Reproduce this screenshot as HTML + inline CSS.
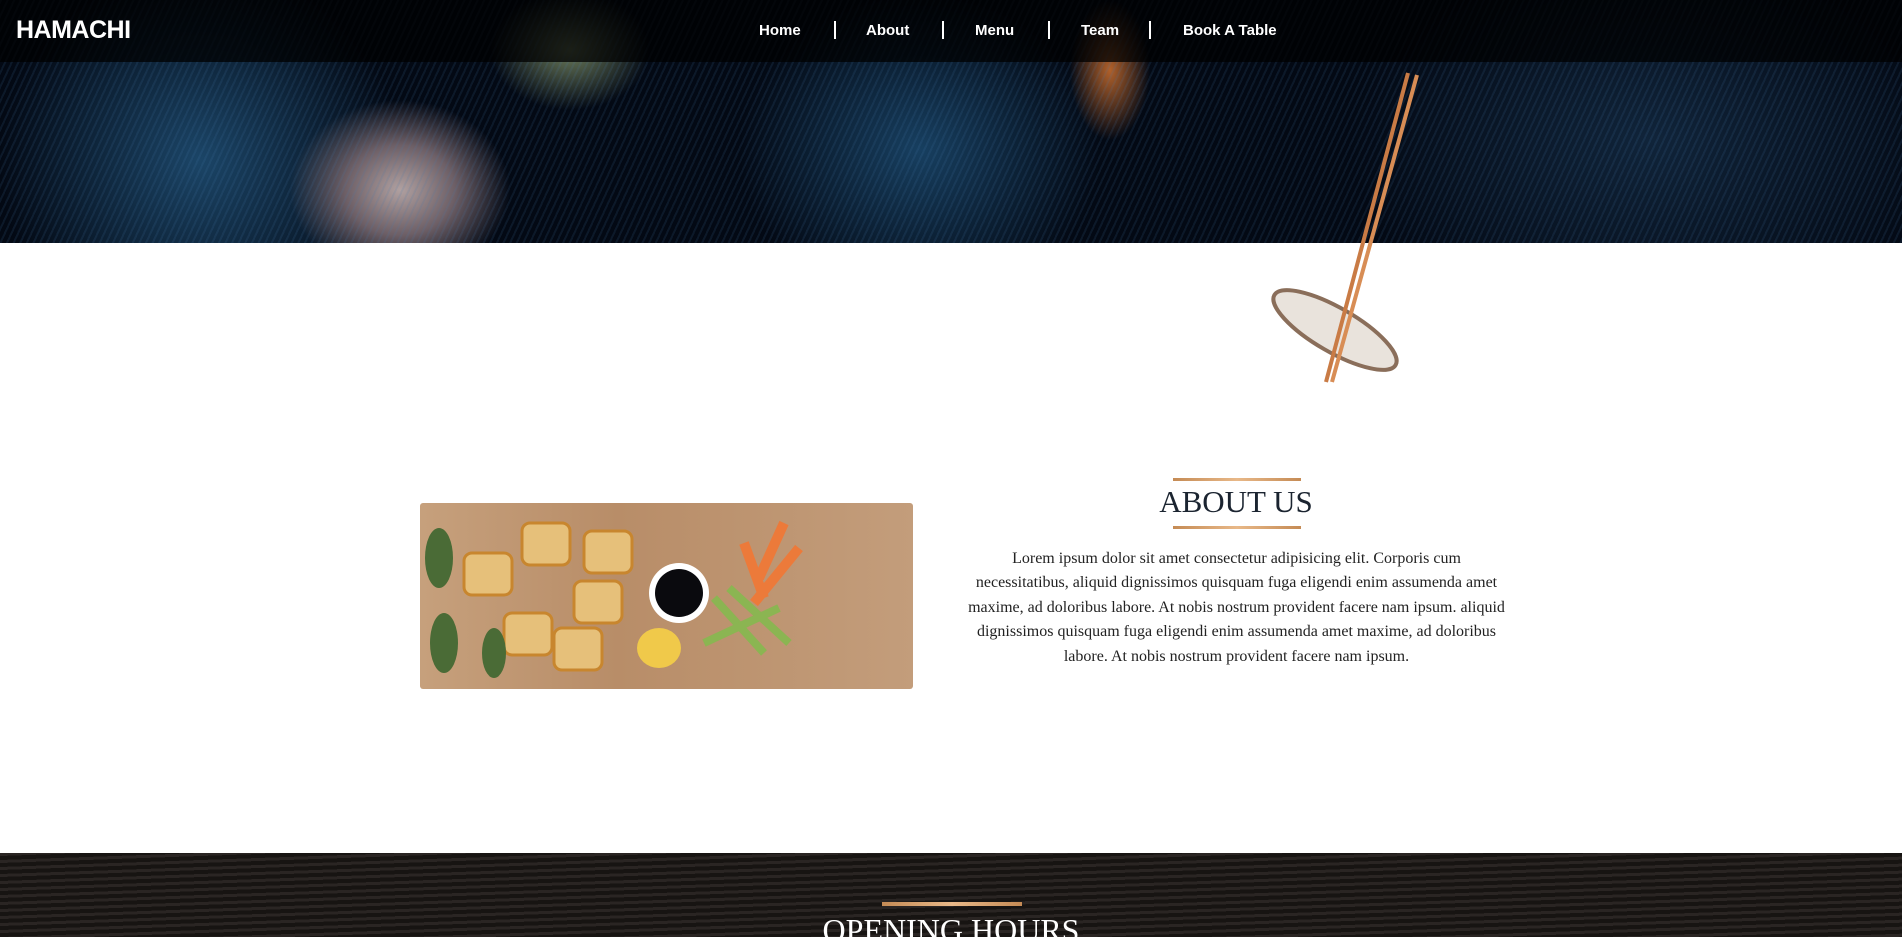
<!DOCTYPE html>
<html><head><meta charset="utf-8"><style>
*{margin:0;padding:0;box-sizing:border-box}
html,body{width:1902px;height:937px;overflow:hidden;background:#fff}
.hero{position:absolute;left:0;top:0;width:1902px;height:243px;overflow:hidden;
background:radial-gradient(ellipse 110px 90px at 400px 190px,#b0a0a0 0%,#6d5f66 50%,rgba(20,30,45,0) 100%),
radial-gradient(ellipse 80px 60px at 570px 50px,#6b7a5a 0%,rgba(0,0,0,0) 100%),
radial-gradient(ellipse 40px 70px at 1110px 70px,#b0602a 0%,rgba(0,0,0,0) 100%),
radial-gradient(ellipse 200px 200px at 200px 160px,#1b4567 0%,rgba(0,0,0,0) 100%),
radial-gradient(ellipse 180px 160px at 920px 150px,#173f60 0%,rgba(0,0,0,0) 100%),
radial-gradient(ellipse 300px 200px at 1650px 140px,#10243a 0%,rgba(0,0,0,0) 100%),
#030914}
.hero .tex{position:absolute;inset:0;background:repeating-linear-gradient(115deg,rgba(70,120,170,.14) 0 2px,rgba(0,0,0,0) 2px 6px)}
.nav{position:absolute;left:0;top:0;width:1902px;height:62px;background:rgba(0,0,0,.75)}
.logo{position:absolute;left:16px;top:16px;color:#fff;font:bold 25px "Liberation Sans",sans-serif;letter-spacing:-.5px}
.nav a{position:absolute;top:22px;color:#fff;font:bold 15px "Liberation Sans",sans-serif;text-decoration:none;white-space:nowrap}
.sep{position:absolute;top:21px;width:2px;height:18px;background:#fff}
.food{position:absolute;left:420px;top:503px;width:493px;height:186px;background:linear-gradient(90deg,#c6a07c,#b88d68 40%,#c39d7b);border-radius:3px}
.h{position:absolute;left:1236px;transform:translateX(-50%);font-family:"Liberation Serif",serif;white-space:nowrap}
.line{position:absolute;height:3px;background:linear-gradient(90deg,#c58b55,#e8b888,#c58b55)}
.p{position:absolute;left:964px;top:547px;width:545px;text-align:center;font:16px/24.4px "Liberation Serif",serif;color:#222}
.dark{position:absolute;left:0;top:853px;width:1902px;height:84px;background:repeating-linear-gradient(178deg,#2a2523 0 3px,#171412 3px 7px),#1f1b19}
</style></head><body>
<div class="hero"><div class="tex"></div></div>
<div class="nav">
<div class="logo">HAMACHI</div>
<a style="left:759px">Home</a><div class="sep" style="left:834px"></div>
<a style="left:866px">About</a><div class="sep" style="left:942px"></div>
<a style="left:975px">Menu</a><div class="sep" style="left:1048px"></div>
<a style="left:1081px">Team</a><div class="sep" style="left:1149px"></div>
<a style="left:1183px">Book A Table</a>
</div>
<svg style="position:absolute;left:1250px;top:65px" width="180" height="330">
<ellipse cx="85" cy="265" rx="70" ry="22" fill="#e9e3dc" transform="rotate(30 85 265)"/>
<ellipse cx="85" cy="265" rx="70" ry="22" fill="none" stroke="#8a6e5a" stroke-width="4" transform="rotate(30 85 265)"/>
<line x1="158" y1="8" x2="76" y2="317" stroke="#c97b45" stroke-width="4"/>
<line x1="167" y1="10" x2="82" y2="317" stroke="#d88d55" stroke-width="4"/>
</svg>
<div class="food">
<svg width="493" height="200" style="position:absolute;left:-6px;top:0;overflow:visible">
<g fill="#e6c07a" stroke="#c8862e" stroke-width="3"><rect x="50" y="50" width="48" height="42" rx="8"/><rect x="108" y="20" width="48" height="42" rx="8"/><rect x="170" y="28" width="48" height="42" rx="8"/><rect x="160" y="78" width="48" height="42" rx="8"/><rect x="90" y="110" width="48" height="42" rx="8"/><rect x="140" y="125" width="48" height="42" rx="8"/></g>
<circle cx="265" cy="90" r="30" fill="#fff"/><circle cx="265" cy="90" r="24" fill="#0a0a0e"/>
<g stroke="#ec7a3a" stroke-width="10"><line x1="330" y1="40" x2="350" y2="95"/><line x1="370" y1="20" x2="345" y2="75"/><line x1="385" y1="45" x2="340" y2="100"/></g>
<g stroke="#8bb552" stroke-width="8"><line x1="300" y1="95" x2="350" y2="150"/><line x1="315" y1="85" x2="375" y2="140"/><line x1="290" y1="140" x2="365" y2="105"/></g>
<g fill="#4a6b36"><ellipse cx="25" cy="55" rx="14" ry="30"/><ellipse cx="30" cy="140" rx="14" ry="30"/><ellipse cx="80" cy="150" rx="12" ry="25"/></g>
<ellipse cx="245" cy="145" rx="22" ry="20" fill="#f0c94a"/>
</svg></div>
<div class="line" style="left:1173px;top:478px;width:128px"></div>
<div class="h" style="top:484px;font-size:31px;color:#1b2430">ABOUT US</div>
<div class="line" style="left:1173px;top:526px;width:128px"></div>
<div class="p">Lorem ipsum dolor sit amet consectetur adipisicing elit. Corporis cum necessitatibus, aliquid dignissimos quisquam fuga eligendi enim assumenda amet maxime, ad doloribus labore. At nobis nostrum provident facere nam ipsum. aliquid dignissimos quisquam fuga eligendi enim assumenda amet maxime, ad doloribus labore. At nobis nostrum provident facere nam ipsum.</div>
<div class="dark"></div>
<div class="line" style="left:882px;top:902px;width:140px;height:4px"></div>
<div class="h" style="left:951px;top:912px;font-size:32px;color:#fff">OPENING HOURS</div>
</body></html>
